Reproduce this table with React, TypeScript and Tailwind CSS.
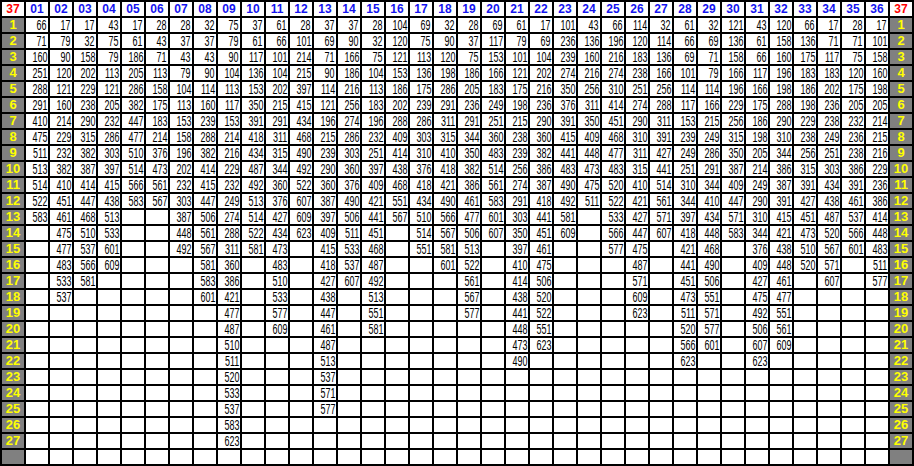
import React from "react";

// numbers listed per column (01..36), top to bottom
const columns: number[][] = [
  [66, 71, 160, 251, 288, 291, 410, 475, 511, 513, 514, 522, 583],
  [17, 79, 90, 120, 121, 160, 214, 229, 232, 382, 410, 451, 461, 475, 477, 483, 533, 537],
  [17, 32, 158, 202, 229, 238, 290, 315, 382, 387, 414, 447, 468, 510, 537, 566, 581],
  [43, 75, 79, 113, 121, 205, 232, 286, 303, 397, 415, 438, 513, 533, 601, 609],
  [17, 61, 186, 205, 286, 382, 447, 477, 510, 514, 566, 583],
  [28, 43, 71, 113, 158, 175, 183, 214, 376, 473, 561, 567],
  [28, 37, 43, 79, 104, 113, 153, 158, 196, 202, 232, 303, 387, 448, 492],
  [32, 37, 43, 90, 114, 160, 239, 288, 382, 414, 415, 447, 506, 561, 567, 581, 583, 601],
  [75, 79, 90, 104, 113, 117, 153, 214, 216, 229, 232, 249, 274, 288, 311, 360, 386, 421, 477, 487, 510, 511, 520, 533, 537, 583, 623],
  [37, 61, 117, 136, 153, 350, 391, 418, 434, 487, 492, 513, 514, 522, 581],
  [61, 66, 101, 104, 202, 215, 291, 311, 315, 344, 360, 376, 427, 434, 473, 483, 510, 533, 577, 609],
  [28, 101, 214, 215, 397, 415, 434, 468, 490, 492, 522, 607, 609, 623],
  [37, 69, 71, 90, 114, 121, 196, 215, 239, 290, 360, 387, 397, 409, 415, 418, 427, 438, 447, 461, 487, 513, 537, 571, 577],
  [37, 90, 166, 186, 216, 256, 274, 286, 303, 360, 376, 490, 506, 511, 533, 537, 607],
  [28, 32, 75, 104, 113, 183, 196, 232, 251, 397, 409, 421, 441, 451, 468, 487, 492, 513, 551, 581],
  [104, 120, 121, 153, 186, 202, 288, 409, 414, 438, 468, 551, 567],
  [69, 75, 113, 136, 175, 239, 286, 303, 310, 376, 418, 434, 510, 514, 551],
  [32, 90, 120, 198, 286, 291, 311, 315, 410, 418, 421, 490, 566, 567, 581, 601],
  [28, 37, 75, 186, 205, 236, 291, 344, 350, 382, 386, 461, 477, 506, 513, 522, 561, 567, 577],
  [69, 117, 153, 166, 183, 249, 251, 360, 483, 514, 561, 583, 601, 607],
  [61, 79, 101, 121, 175, 198, 215, 238, 239, 256, 274, 291, 303, 350, 397, 410, 414, 438, 441, 448, 473, 490],
  [17, 69, 104, 202, 216, 236, 290, 360, 382, 386, 387, 418, 441, 451, 461, 475, 506, 520, 522, 551, 623],
  [101, 236, 239, 274, 350, 376, 391, 415, 441, 483, 490, 492, 581, 609],
  [43, 136, 160, 216, 256, 311, 350, 409, 448, 473, 475, 511],
  [66, 196, 216, 274, 310, 414, 451, 468, 477, 483, 520, 522, 533, 566, 577],
  [114, 120, 183, 238, 251, 274, 290, 310, 311, 315, 410, 421, 427, 447, 475, 487, 571, 609, 623],
  [32, 114, 136, 166, 256, 288, 311, 391, 427, 441, 514, 561, 571, 607],
  [61, 66, 69, 101, 114, 117, 153, 239, 249, 251, 310, 344, 397, 418, 421, 441, 451, 473, 511, 520, 566, 623],
  [32, 69, 71, 79, 114, 166, 215, 249, 286, 291, 344, 410, 434, 448, 468, 490, 506, 551, 571, 577, 601],
  [121, 136, 158, 166, 196, 229, 256, 315, 350, 387, 409, 447, 571, 583],
  [43, 61, 66, 117, 166, 175, 186, 198, 205, 214, 249, 290, 310, 344, 376, 409, 427, 475, 492, 506, 607, 623],
  [120, 158, 160, 196, 198, 288, 290, 310, 344, 386, 387, 391, 415, 421, 438, 448, 461, 477, 551, 561, 609],
  [66, 136, 175, 183, 186, 198, 229, 238, 256, 315, 391, 427, 451, 473, 510, 520],
  [17, 71, 117, 183, 202, 236, 238, 249, 251, 303, 434, 438, 487, 520, 567, 571, 607],
  [28, 71, 75, 120, 175, 205, 232, 236, 238, 386, 391, 461, 537, 566, 601],
  [17, 101, 158, 160, 198, 205, 214, 215, 216, 229, 236, 386, 414, 448, 483, 511, 577],
];

const rowCount = 28; // 27 numbered rows + one blank

function Corner() {
  return (
    <div className="bg-white flex items-center justify-center text-[12px] font-bold leading-[14px] text-[#ff0000]">
      37
    </div>
  );
}

function RowLabel({ n }: { n?: number }) {
  return (
    <div className="bg-[#808080] flex items-center justify-center text-[13px] font-bold leading-[14px] text-[#ffff00]">
      {n}
    </div>
  );
}

export default function App() {
  return (
    <div className="w-[914px] h-[466px] bg-white font-['Liberation_Sans',Arial,sans-serif]">
      <div className="grid grid-cols-[repeat(38,22px)] grid-rows-[repeat(29,14px)] gap-[2px] p-[2px] bg-black w-[914px] h-[466px]">
        {/* header row */}
        <Corner />
        {columns.map((_, i) => (
          <div
            key={i}
            className="bg-white flex items-center justify-center text-[12px] font-bold leading-[14px] text-[#1414f0]"
          >
            {String(i + 1).padStart(2, "0")}
          </div>
        ))}
        <Corner />

        {Array.from({ length: rowCount }, (_, r) => (
          <React.Fragment key={r}>
            <RowLabel n={r < 27 ? r + 1 : undefined} />
            {columns.map((col, c) => (
              <div key={c} className="bg-white flex items-center justify-end pr-[1px] overflow-hidden">
                {col[r] !== undefined && (
                  <span className="inline-block text-[14px] leading-[14px] text-black scale-x-[0.64] origin-right">
                    {col[r]}
                  </span>
                )}
              </div>
            ))}
            <RowLabel n={r < 27 ? r + 1 : undefined} />
          </React.Fragment>
        ))}
      </div>
    </div>
  );
}
